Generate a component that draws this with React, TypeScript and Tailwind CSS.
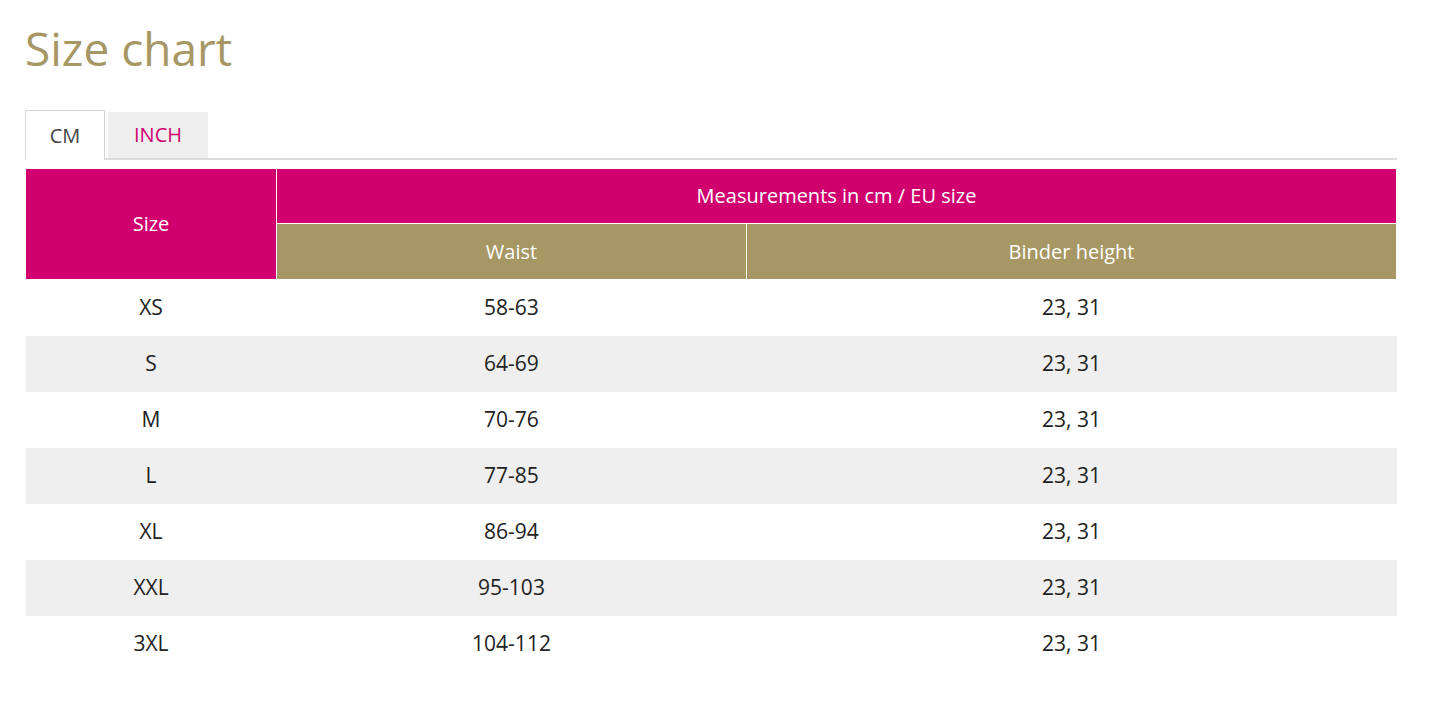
const rows = [
  ["XS", "58-63", "23, 31"],
  ["S", "64-69", "23, 31"],
  ["M", "70-76", "23, 31"],
  ["L", "77-85", "23, 31"],
  ["XL", "86-94", "23, 31"],
  ["XXL", "95-103", "23, 31"],
  ["3XL", "104-112", "23, 31"],
];

export default function App() {
  return (
    <div className="min-h-[707px] bg-white px-[25px] pt-[20px] font-['Open_Sans','Lato',sans-serif] text-[#222]">
      <h1 className="text-[46px] leading-[56px] font-normal text-[#a69764]">Size chart</h1>

      <div className="mt-[34px] mr-[23px] flex items-end border-b-2 border-[#dcdcdc]">
        <button className="-mb-[2px] h-[50px] w-[80px] border border-b-0 border-[#d6d6d6] bg-white text-[20px] text-[#444]">
          CM
        </button>
        <button className="ml-[3px] h-[46px] w-[100px] bg-[#efefef] text-[20px] text-[#d0006f]">INCH</button>
      </div>

      <table className="mt-[8px] mr-[23px] w-[1372px] table-fixed border-collapse text-center text-[21px]">
        <colgroup>
          <col className="w-[251px]" />
          <col className="w-[470px]" />
          <col />
        </colgroup>
        <thead className="text-[20px] text-white">
          <tr className="h-[55px]">
            <th rowSpan={2} className="border border-white bg-[#d0006f] font-normal">
              Size
            </th>
            <th colSpan={2} className="border border-white bg-[#d0006f] font-normal">
              Measurements in cm / EU size
            </th>
          </tr>
          <tr className="h-[56px]">
            <th className="border border-white bg-[#a69764] font-normal">Waist</th>
            <th className="border border-white bg-[#a69764] font-normal">Binder height</th>
          </tr>
        </thead>
        <tbody>
          {rows.map((r, i) => (
            <tr key={r[0]} className={i % 2 === 1 ? "h-[56px] bg-[#efefef]" : "h-[56px] bg-white"}>
              {r.map((c, j) => (
                <td key={j}>{c}</td>
              ))}
            </tr>
          ))}
        </tbody>
      </table>
    </div>
  );
}
